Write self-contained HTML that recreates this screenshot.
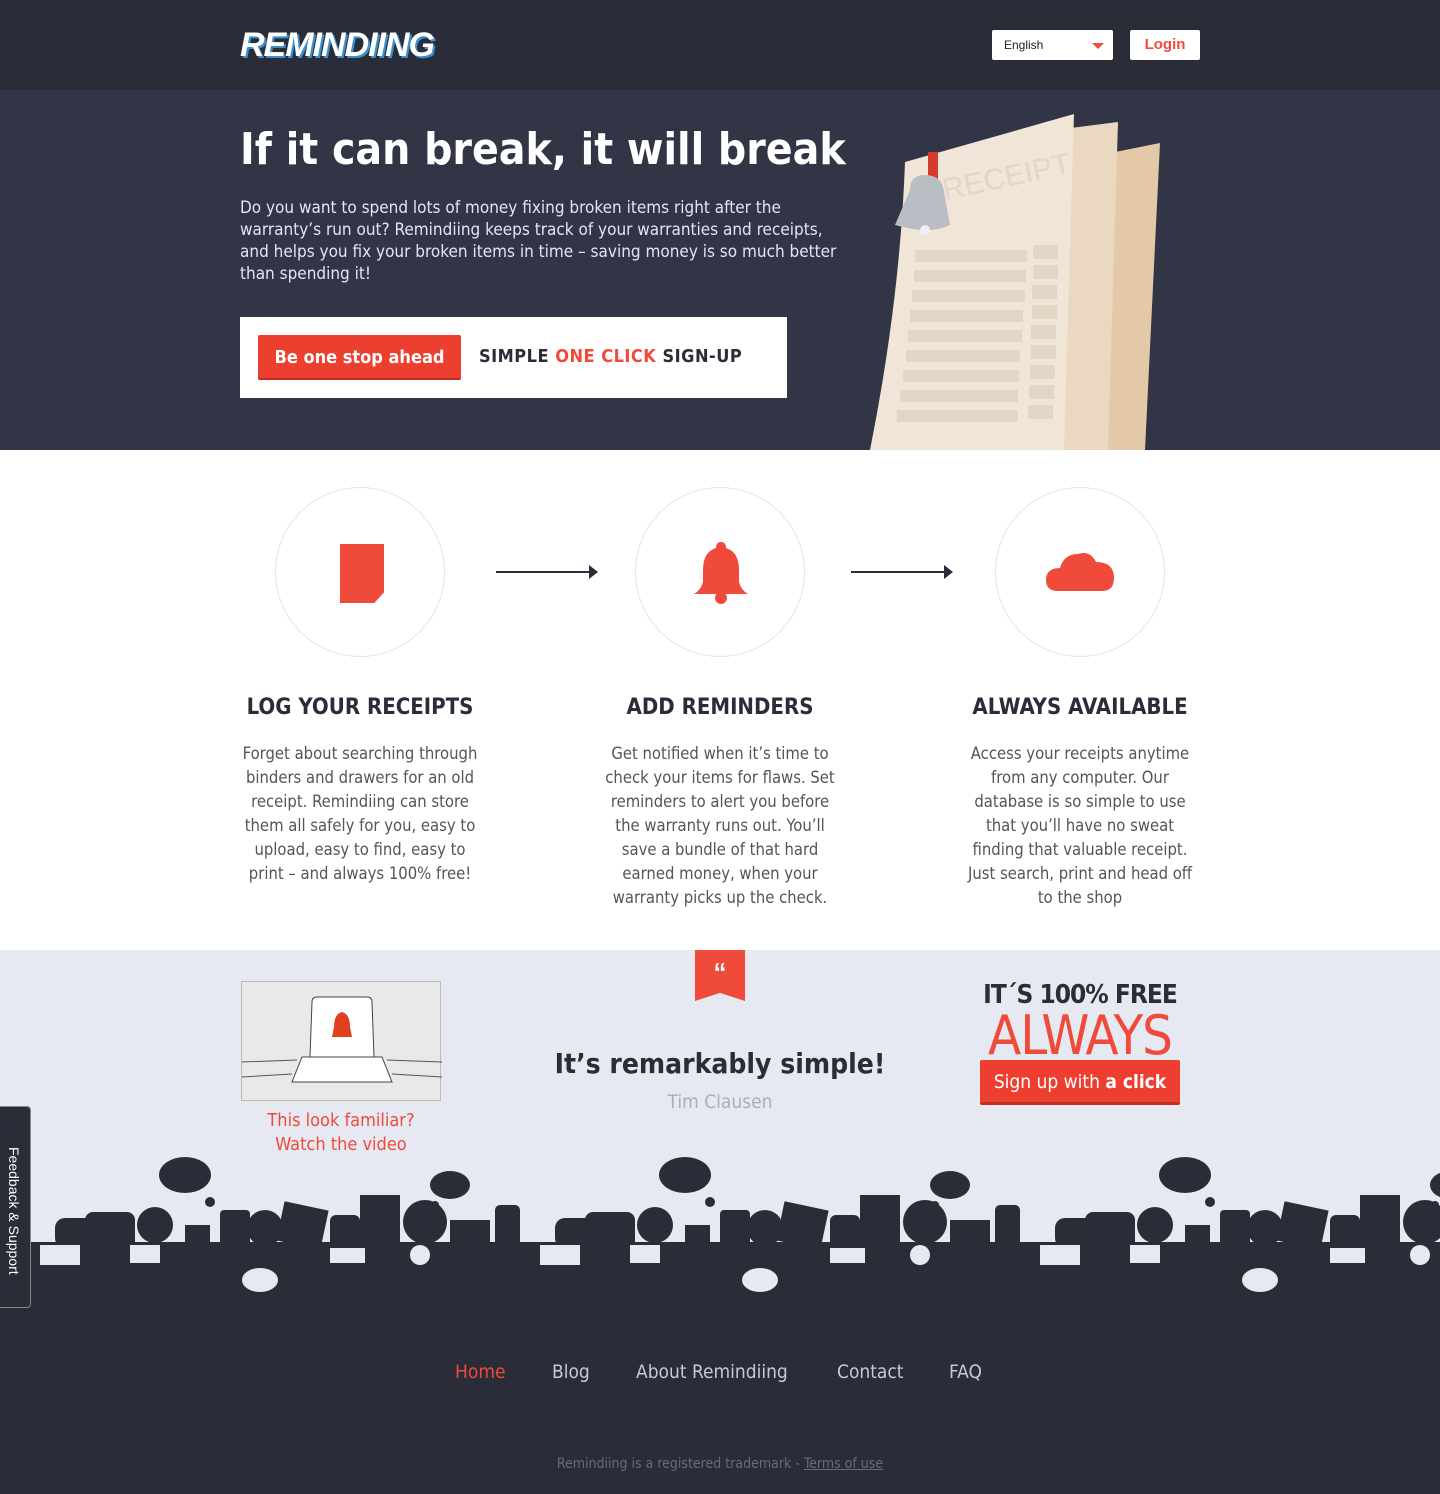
<!DOCTYPE html>
<html><head><meta charset="utf-8"><style>
*{margin:0;padding:0;box-sizing:border-box}
body{width:1440px;height:1494px;font-family:"Liberation Sans",sans-serif;background:#2a2c37;position:relative;overflow:hidden}
.hdr{position:absolute;top:0;left:0;width:1440px;height:90px;background:#2a2d38}
.logo{position:absolute;left:240px;top:26px;font:italic 900 34px "Liberation Sans";color:#fff;letter-spacing:-1px;text-shadow:2px 2px 0 #3a8fd0}
.sel{position:absolute;left:992px;top:30px;width:121px;height:30px;background:#fff;border-radius:2px;font-size:12px;padding:8px 12px;color:#222}
.sel:after{content:"";position:absolute;right:9px;top:13px;border:6px solid transparent;border-top:6px solid #f04a3a}
.login{position:absolute;left:1130px;top:30px;width:70px;height:30px;background:#fff;border-radius:2px;color:#f04a3a;font-weight:bold;font-size:15px;text-align:center;line-height:30px}
.hero{position:absolute;top:90px;left:0;width:1440px;height:360px;background:#313546;overflow:hidden}
.hero h1{position:absolute;left:240px;top:34px;color:#fff;font-size:44px;font-weight:bold;font-family:"DejaVu Sans Condensed","DejaVu Sans",sans-serif;z-index:2}
.hero p{position:absolute;left:240px;top:107px;width:615px;color:#dfe6f5;line-height:22px;font-family:"DejaVu Sans Condensed","DejaVu Sans",sans-serif;font-size:17px}
.cta{position:absolute;left:240px;top:227px;width:547px;height:81px;background:#fff}
.btn{position:absolute;left:18px;top:18px;width:203px;height:45px;background:#ec3f2f;border-radius:2px;color:#fff;font-weight:bold;font-size:18px;line-height:45px;text-align:center;border-bottom:2px solid #c22d20;font-family:"DejaVu Sans Condensed",sans-serif}
.cta .t{position:absolute;left:239px;top:29px;font-weight:bold;font-size:18px;color:#2a2d38;letter-spacing:.5px;font-family:"DejaVu Sans Condensed",sans-serif}
.white{position:absolute;top:450px;left:0;width:1440px;height:500px;background:#fff}
.circ{position:absolute;top:37px;width:170px;height:170px;border:1px solid #e4e4e8;border-radius:50%}
.arr{position:absolute;top:121px;height:2px;background:#2a2d38}
.arr:after{content:"";position:absolute;right:-2px;top:-6px;border:7px solid transparent;border-left:9px solid #2a2d38;border-right:0}
.col{position:absolute;top:245px;width:270px;text-align:center;color:#444}
.col h3{color:#2a2d38;font-family:"DejaVu Sans Condensed","DejaVu Sans",sans-serif;font-weight:bold;font-size:22px}
.col p{margin:22px auto 0;width:238px;line-height:24px;font-family:"DejaVu Sans Condensed","DejaVu Sans",sans-serif;font-size:16.5px;color:#555}
.light{position:absolute;top:950px;left:0;width:1440px;height:300px;background:#e6e8f2}
.foot a{position:absolute;top:1361px;font-size:19px;color:#c6cad8;text-decoration:none;font-family:"DejaVu Sans Condensed",sans-serif}
</style></head><body>
<div class="hdr"><div class="logo">REMINDIING</div><div class="sel">English</div><div class="login">Login</div></div>
<div class="hero">
<svg style="position:absolute;left:860px;top:10px" width="320" height="350" viewBox="0 0 320 350">
<path d="M240 55 L300 43 L285 350 L225 350Z" fill="#e4c9a9"/>
<path d="M195 30 L258 22 L248 350 L185 350Z" fill="#ead8c0"/>
<path d="M45 62 L214 14 L204 350 L10 350 Q40 200 45 62Z" fill="#f0e5d6"/>
<text x="85" y="100" fill="#e5d6c3" font-size="30" font-family="Liberation Sans" transform="rotate(-12 85 100)">RECEIPT</text>
<g fill="#e4d6c4">
<rect x="55" y="150" width="112" height="12"/><rect x="54" y="170" width="112" height="12"/><rect x="52" y="190" width="113" height="12"/><rect x="50" y="210" width="113" height="12"/><rect x="48" y="230" width="114" height="12"/><rect x="46" y="250" width="114" height="12"/><rect x="43" y="270" width="116" height="12"/><rect x="40" y="290" width="118" height="12"/><rect x="37" y="310" width="121" height="12"/>
<rect x="173" y="145" width="25" height="14"/><rect x="173" y="165" width="25" height="14"/><rect x="172" y="185" width="25" height="14"/><rect x="172" y="205" width="25" height="14"/><rect x="171" y="225" width="25" height="14"/><rect x="171" y="245" width="25" height="14"/><rect x="170" y="265" width="25" height="14"/><rect x="169" y="285" width="25" height="14"/><rect x="168" y="305" width="25" height="14"/></g>
<rect x="68" y="52" width="10" height="30" fill="#d43a2e"/>
<path d="M50 90 Q50 75 65 75 Q82 75 84 92 L90 125 Q70 135 35 125Z" fill="#b9bec4"/>
<circle cx="65" cy="130" r="5" fill="#eef"/>
</svg>
<h1>If it can break, it will break</h1>
<p>Do you want to spend lots of money fixing broken items right after the warranty’s run out? Remindiing keeps track of your warranties and receipts, and helps you fix your broken items in time – saving money is so much better than spending it!</p>
<div class="cta"><div class="btn">Be one stop ahead</div><div class="t">SIMPLE <span style="color:#f04a3a">ONE CLICK</span> SIGN-UP</div></div>
</div>
<div class="white">
<div class="circ" style="left:275px"><div style="position:absolute;left:64px;top:56px;width:44px;height:59px;background:#f04a3a;clip-path:polygon(0 0,100% 0,100% 82%,78% 100%,0 100%)"></div></div>
<div class="arr" style="left:496px;width:100px"></div>
<div class="circ" style="left:635px"><svg style="position:absolute;left:55px;top:52px" width="60" height="66" viewBox="0 0 60 66"><path d="M30 2 Q35 2 35 8 Q48 12 48 30 L48 42 Q50 50 57 54 L3 54 Q10 50 12 42 L12 30 Q12 12 25 8 Q25 2 30 2Z" fill="#f04a3a"/><circle cx="30" cy="58" r="6" fill="#f04a3a"/></svg></div>
<div class="arr" style="left:851px;width:100px"></div>
<div class="circ" style="left:995px"><svg style="position:absolute;left:50px;top:62px" width="70" height="42" viewBox="0 0 70 42"><path d="M12 41 Q0 41 0 30 Q0 18 14 18 Q18 4 32 4 Q44 0 50 12 Q68 12 68 28 Q68 41 56 41Z" fill="#f04a3a"/></svg></div>
<div class="col" style="left:225px"><h3>LOG YOUR RECEIPTS</h3><p>Forget about searching through binders and drawers for an old receipt. Remindiing can store them all safely for you, easy to upload, easy to find, easy to print – and always 100% free!</p></div>
<div class="col" style="left:585px"><h3>ADD REMINDERS</h3><p>Get notified when it’s time to check your items for flaws. Set reminders to alert you before the warranty runs out. You’ll save a bundle of that hard earned money, when your warranty picks up the check.</p></div>
<div class="col" style="left:945px"><h3>ALWAYS AVAILABLE</h3><p>Access your receipts anytime from any computer. Our database is so simple to use that you’ll have no sweat finding that valuable receipt. Just search, print and head off to the shop</p></div>
</div>
<div class="light">
<div style="position:absolute;left:241px;top:31px;width:200px;height:120px;background:#e9e9e9;border:1px solid #bbb"><svg width="200" height="120"><path d="M70 20 Q70 15 75 15 L125 15 Q130 15 130 20 L132 75 L68 75Z" fill="#fff" stroke="#444"/><path d="M60 75 L140 75 L150 100 L50 100Z" fill="#fff" stroke="#444"/><path d="M0 80 L55 78 M0 95 L50 92 M145 78 L200 80 M150 92 L200 95" stroke="#555"/><path d="M100 30 Q92 32 92 45 L90 55 L110 55 L108 45 Q108 32 100 30Z" fill="#e04020"/></svg></div>
<div style="position:absolute;left:241px;top:159px;width:200px;text-align:center;color:#f04a3a;line-height:24px;font-family:'DejaVu Sans Condensed','DejaVu Sans',sans-serif;font-size:18px">This look familiar?<br>Watch the video</div>
<div style="position:absolute;left:695px;top:0;width:50px;height:51px;background:#f04a3a;clip-path:polygon(0 0,100% 0,100% 100%,50% 84%,0 100%);color:#fff;font-weight:bold;font-size:26px;text-align:center;line-height:44px">“</div>
<div style="position:absolute;left:420px;top:97px;width:600px;text-align:center;font-size:28px;font-weight:bold;color:#2a2d38;font-family:'DejaVu Sans Condensed','DejaVu Sans',sans-serif">It’s remarkably simple!</div>
<div style="position:absolute;left:420px;top:141px;width:600px;text-align:center;font-size:19px;color:#a9adbd;font-family:'DejaVu Sans Condensed',sans-serif">Tim Clausen</div>
<div style="position:absolute;left:960px;top:30px;width:240px;text-align:center;font-size:26px;font-weight:bold;color:#2a2d38;font-family:'DejaVu Sans Condensed','DejaVu Sans',sans-serif;letter-spacing:-1px">IT´S 100% FREE</div>
<div style="position:absolute;left:960px;top:54px;width:240px;text-align:center;font-size:54px;color:#f04a3a;font-family:'DejaVu Sans Condensed','DejaVu Sans',sans-serif;letter-spacing:-1px">ALWAYS</div>
<div style="position:absolute;left:980px;top:110px;width:200px;height:45px;background:#ec3f2f;border-radius:2px;color:#fff;font-size:19px;text-align:center;line-height:45px;border-bottom:3px solid #c22d20;font-family:'DejaVu Sans Condensed',sans-serif">Sign up with <b>a click</b></div>
</div>
<svg style="position:absolute;left:0;top:1150px" width="1440" height="150" viewBox="0 0 1440 150">
<defs><pattern id="g" x="30" y="0" width="500" height="150" patternUnits="userSpaceOnUse">
<g fill="#2a2c37"><ellipse cx="155" cy="25" rx="26" ry="18"/><circle cx="180" cy="52" r="5"/>
<rect x="25" y="68" width="40" height="30" rx="10"/><rect x="55" y="62" width="50" height="40" rx="8"/><circle cx="125" cy="75" r="18"/><rect x="155" y="75" width="25" height="30"/><rect x="190" y="60" width="30" height="40" rx="4"/><circle cx="235" cy="78" r="18"/><rect x="250" y="55" width="45" height="40" transform="rotate(12 270 75)"/><rect x="300" y="65" width="30" height="40" rx="6"/><rect x="330" y="45" width="40" height="50"/><circle cx="395" cy="72" r="22"/><rect x="420" y="70" width="40" height="30"/><rect x="465" y="55" width="25" height="45" rx="5"/>
<ellipse cx="420" cy="35" rx="20" ry="14"/><circle cx="405" cy="55" r="4"/></g>
<g fill="#e6e8f2"><ellipse cx="230" cy="130" rx="18" ry="12"/><rect x="10" y="95" width="40" height="20"/><rect x="100" y="95" width="30" height="18"/><rect x="300" y="98" width="35" height="15"/><circle cx="390" cy="105" r="10"/></g>
</pattern></defs>
<rect x="0" y="92" width="1440" height="58" fill="#2a2c37"/>
<rect x="0" y="0" width="1440" height="150" fill="url(#g)"/>
</svg>
<div style="position:absolute;left:0;top:1106px;width:31px;height:202px;background:#2a2c37;border:1px solid #888;border-left:0;border-radius:0 4px 4px 0"><div style="position:absolute;left:6px;top:40px;writing-mode:vertical-rl;color:#fff;font-size:14px">Feedback &amp; Support</div></div>
<div class="foot"><a style="left:455px;color:#f04a3a">Home</a><a style="left:552px">Blog</a><a style="left:636px">About Remindiing</a><a style="left:837px">Contact</a><a style="left:949px">FAQ</a></div>
<div style="position:absolute;top:1456px;left:0;width:1440px;text-align:center;font-size:14px;color:#666a7c;font-family:'DejaVu Sans Condensed',sans-serif">Remindiing is a registered trademark - <u>Terms of use</u></div>
</body></html>
